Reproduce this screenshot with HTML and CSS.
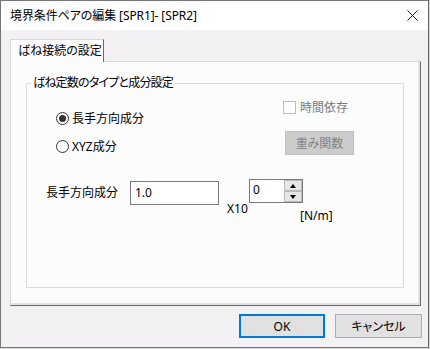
FILE: index.html
```html
<!DOCTYPE html>
<html lang="ja">
<head>
  <meta charset="UTF-8">
  <title>境界条件ペアの編集</title>
  <link rel="stylesheet" href="styles.css">
</head>
<body>
  <div class="dialog">
    <div class="titlebar">
      <span class="title">境界条件ペアの編集 [SPR1]- [SPR2]</span>
      <svg class="close" width="11" height="11" viewBox="0 0 11 11">
        <path d="M0.5 0.5 L10.5 10.5 M10.5 0.5 L0.5 10.5" stroke="#1a1a1a" stroke-width="1" fill="none"/>
      </svg>
    </div>
    <div class="dialog-body">
      <div class="tabs">
        <div class="tab">ばね接続の設定</div>
      </div>
      <div class="panel">
        <fieldset class="group">
          <legend>ばね定数のタイプと成分設定</legend>
          <div class="opts">
            <div class="radios">
              <label class="radio"><span class="dot checked"></span>長手方向成分</label>
              <label class="radio"><span class="dot"></span>XYZ成分</label>
            </div>
            <div class="side">
              <label class="check disabled"><span class="box"></span>時間依存</label>
              <button class="btn-off">重み関数</button>
            </div>
          </div>
          <div class="values">
            <span class="lbl">長手方向成分</span>
            <div class="textbox">1.0</div>
            <span class="x10">X10</span>
            <div class="spin">
              <span class="spin-val">0</span>
              <div class="spin-btns">
                <span class="spin-btn"><i class="tri up"></i></span>
                <span class="spin-btn"><i class="tri down"></i></span>
              </div>
            </div>
            <span class="unit">[N/m]</span>
          </div>
        </fieldset>
      </div>
      <div class="actions">
        <button class="btn ok">OK</button>
        <button class="btn">キャンセル</button>
      </div>
    </div>
  </div>
</body>
</html>
```

FILE: styles.css
```css
* {
  box-sizing: border-box;
}
body {
  margin: 0;
  background: #d8d8d8;
  font-family: 'Noto Sans', 'Noto Sans CJK JP', sans-serif;
  font-size: 12px;
  font-feature-settings: 'palt';
  color: #000;
}
.dialog {
  width: 429px;
  height: 348px;
  border: 1px solid #777;
  border-right-color: #5f6661;
  background: #f3f1f4;
  display: flex;
  flex-direction: column;
}
.titlebar {
  height: 29px;
  background: #fff;
  display: flex;
  align-items: center;
  justify-content: space-between;
  padding: 0 10px 0 9px;
  flex-shrink: 0;
}
.title {
  line-height: 16px;
  letter-spacing: -0.1px;
}
.close {
  display: block;
}
.dialog-body {
  flex: 1;
  padding: 9px 6px 0 9px;
}
.tabs {
  display: flex;
  height: 22px;
}
.tab {
  position: relative;
  z-index: 1;
  width: 94px;
  height: 23px;
  padding: 3px 0 0 7px;
  line-height: 16px;
  background: #fcfcfc;
  border: 1px solid #d9d9d9;
  border-right: 1px solid #6a6a6a;
  border-bottom: none;
}
.panel {
  width: 411px;
  height: 245px;
  background: #fcfcfc;
  border: 1px solid #d9d9d9;
  border-right-color: #696969;
  border-bottom-color: #696969;
  box-shadow: inset -2px -2px 0 #e3e3e3;
  padding: 13px 0 0 15px;
}
.group {
  margin: 0;
  padding: 0;
  width: 378px;
  height: 213px;
  border: 1px solid #dcdcdc;
  min-inline-size: 0;
}
.group legend {
  margin-left: 4px;
  padding: 0 2px;
  line-height: 16px;
  letter-spacing: -0.8px;
}
.opts {
  display: flex;
  align-items: flex-start;
}
.radios {
  margin-left: 29px;
  width: 227px;
  padding-top: 17px;
  display: flex;
  flex-direction: column;
  gap: 8px;
}
.radio {
  display: flex;
  align-items: center;
  gap: 3px;
  height: 20px;
}
.dot {
  width: 13px;
  height: 13px;
  border: 1px solid #333;
  border-radius: 50%;
  background: #fff;
  display: flex;
  align-items: center;
  justify-content: center;
}
.dot.checked::after {
  content: '';
  width: 7px;
  height: 7px;
  border-radius: 50%;
  background: #333;
}
.side {
  padding-top: 8px;
  display: flex;
  flex-direction: column;
  align-items: flex-start;
}
.check {
  display: flex;
  align-items: center;
  gap: 4px;
  height: 16px;
}
.check .box {
  width: 13px;
  height: 13px;
  border: 1px solid #bcbcbc;
  background: #fff;
}
.check.disabled {
  color: #7a7a7a;
}
.btn-off {
  margin: 16px 0 0 2px;
  width: 69px;
  height: 24px;
  background: #cccccc;
  border: 1px solid #bfbfbf;
  color: #838383;
  font: inherit;
  padding: 0;
}
.values {
  display: flex;
  align-items: flex-start;
  margin-top: 23px;
}
.lbl {
  margin: 6px 0 0 19px;
  width: 84px;
  line-height: 16px;
}
.textbox {
  margin-top: 2px;
  width: 89px;
  height: 24px;
  border: 1px solid #7a7a7a;
  background: #fff;
  padding-left: 4px;
  line-height: 22px;
}
.x10 {
  margin: 22px 0 0 8px;
  width: 22px;
  line-height: 16px;
}
.spin {
  width: 54px;
  height: 24px;
  border: 1px solid #7a7a7a;
  background: #fff;
  display: flex;
}
.spin-val {
  flex: 1;
  padding-left: 3px;
  line-height: 20px;
}
.spin-btns {
  width: 18px;
  display: flex;
  flex-direction: column;
}
.spin-btn {
  flex: 1;
  background: #e6e6e6;
  border: 1px solid #bababa;
  display: flex;
  align-items: center;
  justify-content: center;
}
.tri {
  width: 0;
  height: 0;
  border-left: 3.5px solid transparent;
  border-right: 3.5px solid transparent;
}
.tri.up {
  border-bottom: 4px solid #000;
}
.tri.down {
  border-top: 4px solid #000;
}
.unit {
  margin: 29px 0 0 -3px;
  line-height: 16px;
}
.actions {
  display: flex;
  justify-content: flex-end;
  gap: 10px;
  margin-top: 8px;
}
.btn {
  height: 24px;
  width: 87px;
  background: #e1e1e1;
  border: 1px solid #adadad;
  font: inherit;
  color: #000;
  padding: 0;
}
.btn.ok {
  width: 86px;
  border: 2px solid #0078d7;
}
```
